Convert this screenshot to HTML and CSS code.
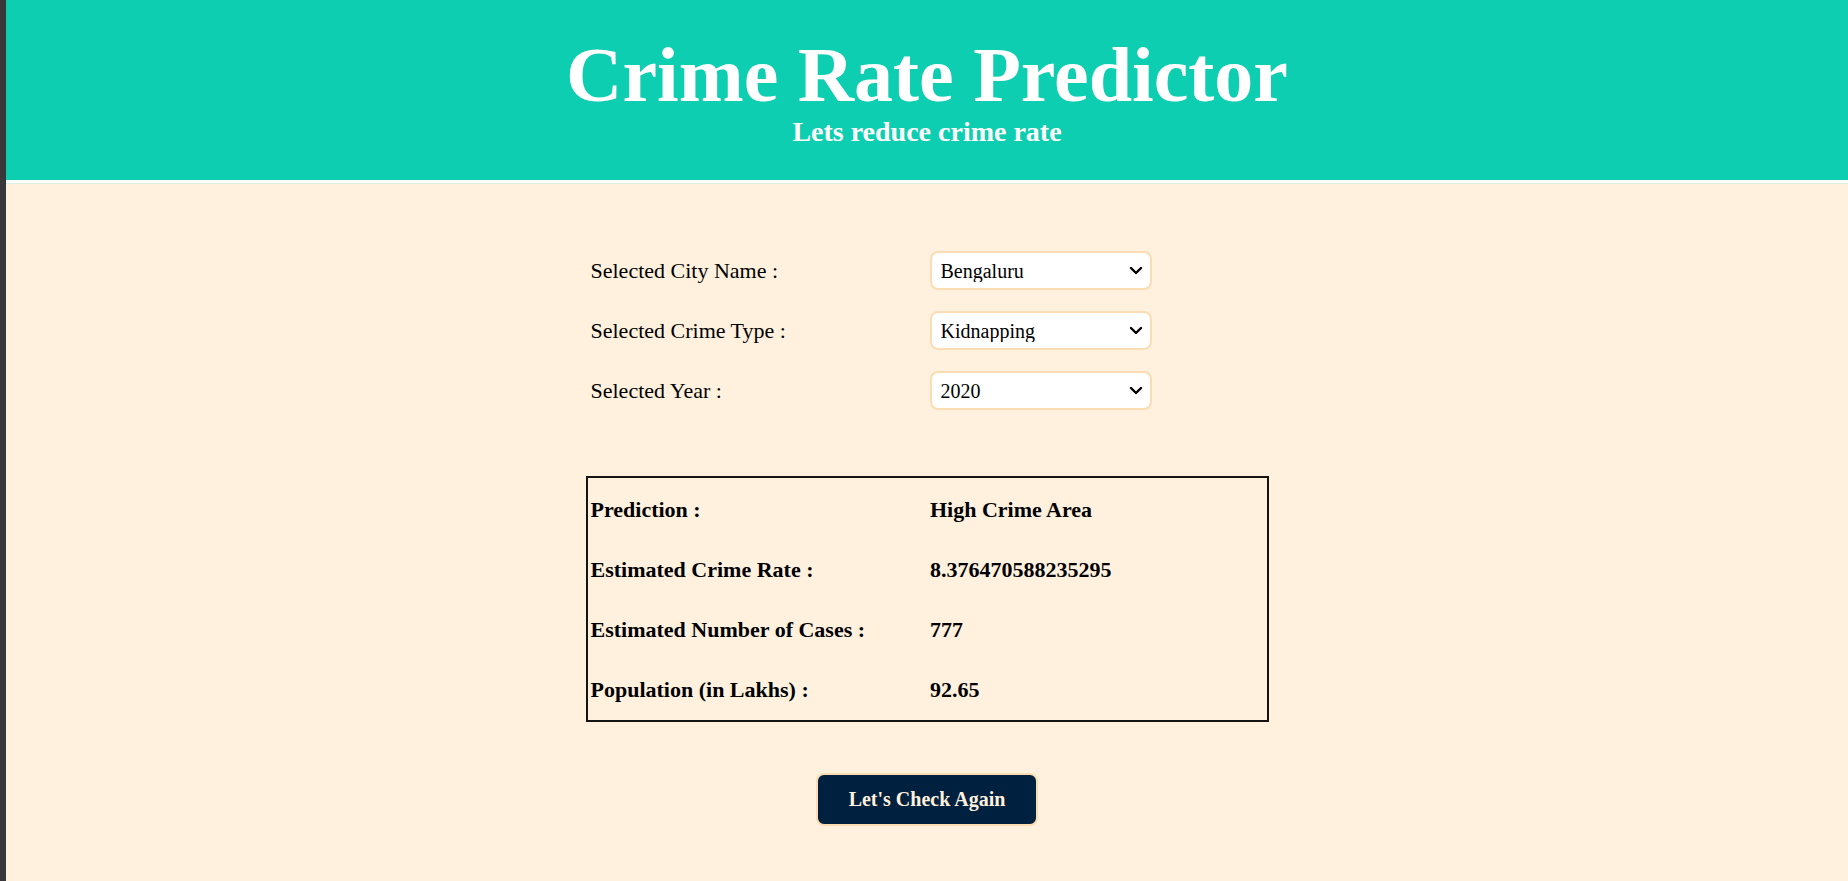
FILE: index.html
```html
<!DOCTYPE html>
<html lang="en">
<head>
<meta charset="utf-8">
<title>Crime Rate Predictor</title>
<link rel="stylesheet" href="styles.css">
</head>
<body>
<div class="strip"></div>
<div class="page">
  <header class="header">
    <h1 class="title">Crime Rate Predictor</h1>
    <h2 class="subtitle">Lets reduce crime rate</h2>
  </header>
  <main class="main">
    <form class="form">
      <div class="form-row">
        <label class="form-label" for="city">Selected City Name :</label>
        <select class="form-select" id="city">
          <option>Bengaluru</option>
        </select>
      </div>
      <div class="form-row">
        <label class="form-label" for="crime">Selected Crime Type :</label>
        <select class="form-select" id="crime">
          <option>Kidnapping</option>
        </select>
      </div>
      <div class="form-row">
        <label class="form-label" for="year">Selected Year :</label>
        <select class="form-select" id="year">
          <option>2020</option>
        </select>
      </div>
    </form>
    <div class="result">
      <div class="result-row"><span class="result-key">Prediction :</span><span class="result-val">High Crime Area</span></div>
      <div class="result-row"><span class="result-key">Estimated Crime Rate :</span><span class="result-val">8.376470588235295</span></div>
      <div class="result-row"><span class="result-key">Estimated Number of Cases :</span><span class="result-val">777</span></div>
      <div class="result-row"><span class="result-key">Population (in Lakhs) :</span><span class="result-val">92.65</span></div>
    </div>
    <button class="again-btn" type="button">Let's Check Again</button>
  </main>
</div>
</body>
</html>
```

FILE: styles.css
```css
html, body {
  margin: 0;
  padding: 0;
  height: 100%;
}

body {
  display: flex;
  font-family: "Liberation Serif", "Times New Roman", serif;
  color: #000;
  background: #fff1de;
}

.strip {
  width: 6px;
  flex: 0 0 6px;
  background: #383838;
}

.page {
  flex: 1;
  display: flex;
  flex-direction: column;
  min-height: 881px;
}

.header {
  background: #0dceb0;
  height: 183px;
  box-sizing: border-box;
  padding-top: 36px;
  text-align: center;
  color: #fff;
  border-bottom: 3px solid #ffffff;
  box-shadow: 0 1px 0 #d6f4e4;
  margin-bottom: 1px;
}

.title {
  margin: 0 0 3px;
  font-size: 78px;
  line-height: 78px;
  font-weight: bold;
}

.subtitle {
  margin: 0;
  font-size: 28px;
  line-height: 29px;
  font-weight: bold;
}

.main {
  flex: 1;
  display: flex;
  flex-direction: column;
  align-items: center;
  padding-top: 67px;
}

.form {
  width: 683px;
  display: flex;
  flex-direction: column;
  gap: 21px;
}

.form-row {
  display: grid;
  grid-template-columns: 344px 222px;
  align-items: center;
  height: 39px;
}

.form-label {
  padding-left: 5px;
  font-size: 22px;
}

.form-select {
  -webkit-appearance: none;
  appearance: none;
  width: 222px;
  height: 39px;
  box-sizing: border-box;
  border: 2px solid #fcdcb2;
  border-radius: 8px;
  background-color: #ffffff;
  background-image: url("data:image/svg+xml,%3Csvg xmlns='http://www.w3.org/2000/svg' width='14' height='9' viewBox='0 0 14 9'%3E%3Cpath d='M2 2 L7 7 L12 2' fill='none' stroke='%23000' stroke-width='2.4' stroke-linecap='round' stroke-linejoin='round'/%3E%3C/svg%3E");
  background-repeat: no-repeat;
  background-position: right 7px center;
  background-size: 14px 9px;
  font-family: "Liberation Serif", "Times New Roman", serif;
  font-size: 20px;
  color: #000;
  padding: 0 24px 0 9px;
}

.result {
  margin-top: 66px;
  width: 683px;
  box-sizing: border-box;
  border: 2px solid #141414;
  padding-top: 2px;
}

.result-row {
  display: grid;
  grid-template-columns: 1fr 1fr;
  align-items: center;
  height: 60px;
  font-size: 22px;
  font-weight: bold;
}

.result-key,
.result-val {
  padding-left: 3px;
}

.again-btn {
  margin-top: 51px;
  height: 53px;
  padding: 0 31px;
  box-sizing: border-box;
  background: #00203f;
  color: #fff1de;
  border: 2px solid #fcdcb2;
  border-radius: 8px;
  font-family: "Liberation Serif", "Times New Roman", serif;
  font-size: 20px;
  font-weight: bold;
}
```
